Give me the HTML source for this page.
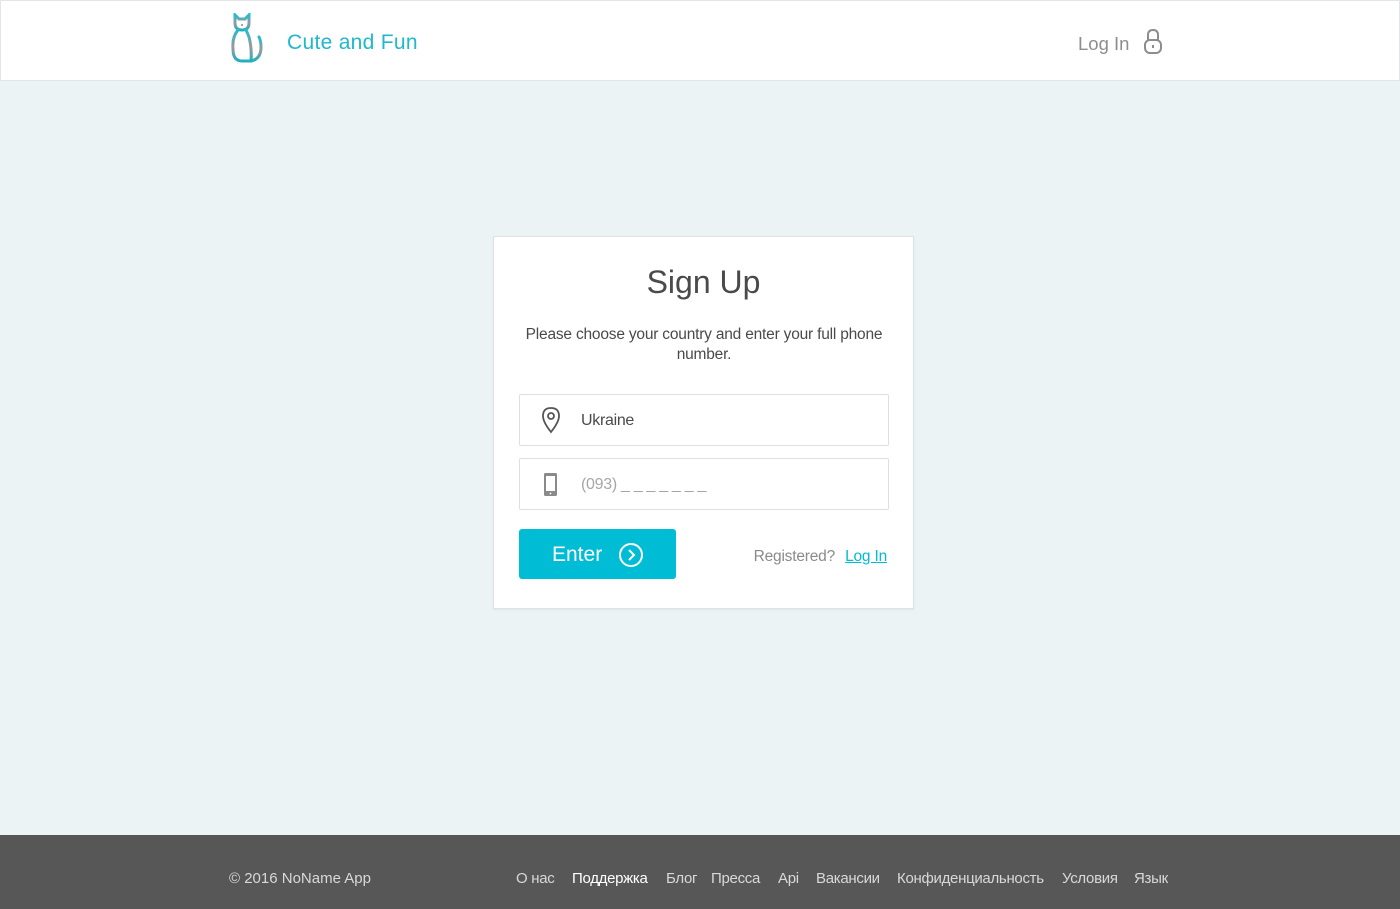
<!DOCTYPE html>
<html><head><meta charset="utf-8"><style>
*{margin:0;padding:0;box-sizing:border-box}
body{width:1400px;height:909px;background:#ebf3f5;font-family:"Liberation Sans",sans-serif;position:relative;overflow:hidden}
.hdr{position:absolute;left:0;top:0;width:1400px;height:81px;background:#fff;border:1px solid #e2e6e8}
.logo{position:absolute;left:230px;top:12px}
.brand{position:absolute;left:286px;top:30px;font-size:21px;color:#1fb8cc;letter-spacing:0.3px}
.login{position:absolute;left:1077px;top:32px;font-size:18.5px;color:#8d8d8d}
.card{position:absolute;left:493px;top:236px;width:421px;height:373px;background:#fff;border:1px solid #dde2e4;box-shadow:0 1px 2px rgba(0,0,0,.06)}
h1{position:absolute;top:27px;width:100%;text-align:center;font-weight:normal;font-size:32px;color:#4a4a4a}
.desc{position:absolute;top:88px;left:20px;width:380px;text-align:center;font-size:15.5px;line-height:20px;color:#4a4a4a;letter-spacing:-0.2px}
.inp{position:absolute;left:25px;width:370px;height:52px;border:1px solid #dcdfe0;border-radius:2px}
.inp span{position:absolute;left:61px;top:17px;font-size:16px;letter-spacing:-0.3px}
.inp svg{position:absolute}
.btn{position:absolute;left:25px;top:292px;width:157px;height:50px;background:#00bcd4;border-radius:3px;color:#fff;font-size:21px}
.btn span{position:absolute;left:33px;top:14px}
.reg{position:absolute;right:26px;top:311px;font-size:15.5px;color:#8a8a8a;letter-spacing:-0.2px}
.reg a{color:#00bcd4;text-decoration:underline;margin-left:6px}
.ftr{position:absolute;left:0;top:835px;width:1400px;height:74px;background:#575757;color:#d8d8d8;font-size:15px}
.copy{position:absolute;left:229px;top:35px}
.links{position:absolute;left:516px;top:35px;white-space:nowrap;letter-spacing:-0.3px}
.links span{position:absolute;top:0}
</style></head><body>
<div class="hdr">
<svg class="logo" width="34" height="52" viewBox="0 0 34 52"><defs><linearGradient id="g" x1="0" y1="0" x2="0" y2="1"><stop offset="0" stop-color="#22bcd0"/><stop offset=".55" stop-color="#9a9a9a"/><stop offset="1" stop-color="#1fb0c0"/></linearGradient></defs>
<g fill="none" stroke="url(#g)" stroke-width="3" stroke-linecap="round"><path d="M4 2 L4 10 Q4 17 11 17 Q18 17 18 10 L18 2 L14 6 L8 6 Z"/><path d="M7 17 Q1 24 2 36 Q2 48 11 48 L20 48 Q21 36 18 24 Q16 19 15 17"/><path d="M11 38 L11 48"/><path d="M20 48 Q30 46 30 34 Q30 28 28 24"/></g><circle cx="11" cy="12" r="1" fill="#888"/></svg>
<div class="brand">Cute and Fun</div>
<div class="login">Log In</div>
<svg style="position:absolute;left:1141px;top:27px" width="22" height="27" viewBox="0 0 22 27" fill="none" stroke="#8d8d8d" stroke-width="2"><path d="M6 12 V7 Q6 2 11 2 Q16 2 16 7 V12"/><rect x="3" y="12" width="16" height="13" rx="5"/><path d="M11 17 V20"/></svg>
</div>
<div class="card">
<h1>Sign Up</h1>
<div class="desc">Please choose your country and enter your full phone number.</div>
<div class="inp" style="top:157px"><svg style="left:20px;top:11px" width="22" height="28" viewBox="0 0 22 28" fill="none" stroke="#555" stroke-width="1.8"><path d="M11 26 Q3 16 3 10 Q3 2 11 2 Q19 2 19 10 Q19 16 11 26Z"/><circle cx="11" cy="10" r="3"/></svg><span style="color:#4a4a4a">Ukraine</span></div>
<div class="inp" style="top:221px"><svg style="left:23px;top:13px" width="16" height="25" viewBox="0 0 16 25"><rect x="1" y="1" width="13" height="23" rx="1.5" fill="#8a8a8a"/><rect x="3" y="4" width="9" height="15" fill="#fff"/><circle cx="7.5" cy="21.5" r=".9" fill="#fff"/></svg><span style="color:#a6a6a6">(093) _ _ _ _ _ _ _</span></div>
<div class="btn"><span>Enter</span><svg style="position:absolute;left:99px;top:13px" width="26" height="26" viewBox="0 0 26 26" fill="none" stroke="#fff" stroke-width="2"><circle cx="13" cy="13" r="11"/><path d="M11 8 L16 13 L11 18"/></svg></div>
<div class="reg">Registered? <a>Log In</a></div>
</div>
<div class="ftr"><div class="copy">© 2016 NoName App</div>
<div class="links"><span style="left:0">О нас</span><span style="left:56px;color:#fff">Поддержка</span><span style="left:150px">Блог</span><span style="left:195px">Пресса</span><span style="left:262px">Api</span><span style="left:300px">Вакансии</span><span style="left:381px">Конфиденциальность</span><span style="left:546px">Условия</span><span style="left:618px">Язык</span></div></div>
</body></html>
